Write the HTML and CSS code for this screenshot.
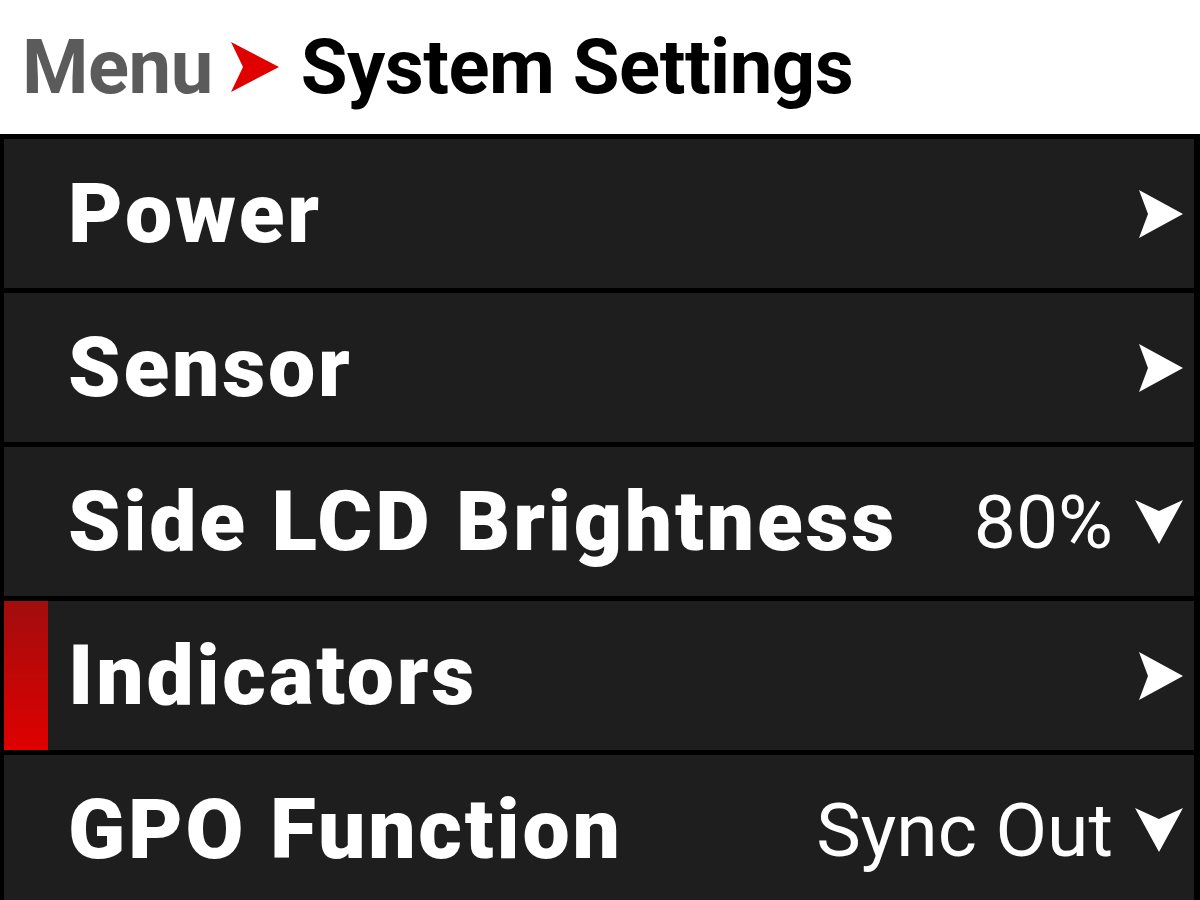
FILE: index.html
```html
<!DOCTYPE html>
<html lang="en">
<head>
    <meta charset="UTF-8">
    <meta name="viewport" content="width=device-width, initial-scale=1.0">
    <title>System Settings</title>
    <link rel="stylesheet" href="styles.css">
</head>
<body>
    <div class="screen">
        <div class="header">
            <span class="crumb">Menu</span>
            <svg class="crumb-arrow" viewBox="0 0 48 50"><polygon points="0,0 48,25 0,50 12,25" fill="#e00000"/></svg>
            <span class="title">System Settings</span>
        </div>
        <div class="menu">
            <div class="row">
                <span class="label">Power</span>
                <svg class="chev-right" viewBox="0 0 44 48"><polygon points="0,0 44,24 0,48 9,24" fill="#fff"/></svg>
            </div>
            <div class="row">
                <span class="label">Sensor</span>
                <svg class="chev-right" viewBox="0 0 44 48"><polygon points="0,0 44,24 0,48 9,24" fill="#fff"/></svg>
            </div>
            <div class="row">
                <span class="label">Side LCD Brightness</span>
                <span class="value">80%</span>
                <svg class="chev-down" viewBox="0 0 48 44"><polygon points="0,0 24,11 48,0 24,44" fill="#fff"/></svg>
            </div>
            <div class="row selected">
                <span class="label">Indicators</span>
                <svg class="chev-right" viewBox="0 0 44 48"><polygon points="0,0 44,24 0,48 9,24" fill="#fff"/></svg>
            </div>
            <div class="row">
                <span class="label">GPO Function</span>
                <span class="value">Sync Out</span>
                <svg class="chev-down" viewBox="0 0 48 44"><polygon points="0,0 24,11 48,0 24,44" fill="#fff"/></svg>
            </div>
        </div>
    </div>
</body>
</html>
```

FILE: styles.css
```css
body {
    margin: 0;
    background: #000;
    font-family: Roboto, 'Liberation Sans', sans-serif;
    width: 1200px;
    height: 900px;
    overflow: hidden;
}
.screen {
    display: flex;
    flex-direction: column;
    height: 900px;
}
.header {
    background: #fff;
    height: 134px;
    flex-shrink: 0;
    display: flex;
    align-items: center;
    padding-left: 22px;
    box-sizing: border-box;
}
.crumb {
    color: #5b5b5b;
    font-weight: 700;
    font-size: 76px;
    letter-spacing: -0.5px;
}
.crumb-arrow {
    width: 48px;
    height: 50px;
    margin: 0 22px 0 18px;
}
.title {
    color: #000;
    font-weight: 700;
    font-size: 76px;
    letter-spacing: -0.5px;
}
.menu {
    display: flex;
    flex-direction: column;
    gap: 5px;
    padding: 5px 6px 0 4px;
}
.row {
    position: relative;
    height: 149px;
    flex-shrink: 0;
    background: #1e1e1e;
    display: flex;
    align-items: center;
    padding: 0 11px 0 64px;
    color: #fff;
}
.row.selected::before {
    content: "";
    position: absolute;
    left: 0;
    top: 0;
    bottom: 0;
    width: 44px;
    background: linear-gradient(#a10d0d, #e00000);
}
.label {
    flex: 1;
    font-weight: 900;
    font-size: 84px;
    letter-spacing: 2.8px;
}
.value {
    font-size: 75px;
    font-weight: 400;
    margin-right: 22px;
}
.chev-right {
    width: 44px;
    height: 48px;
}
.chev-down {
    width: 48px;
    height: 44px;
}
```
